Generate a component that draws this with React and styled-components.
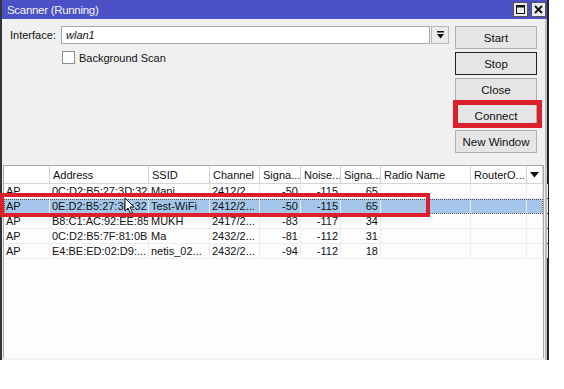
import React from 'react';
import styled, { createGlobalStyle } from 'styled-components';

const Global = createGlobalStyle`
  body {
    margin: 0;
    background: #ffffff;
    font-family: 'Liberation Sans', Arial, sans-serif;
    font-size: 11px;
    color: #111;
  }
`;

const Window = styled.div`
  position: relative;
  width: 545px;
  height: 360px;
  background: #f0f0f0;
  border-left: 2px solid #333;
  border-right: 2px solid #222;
  box-shadow: inset -2px 0 0 #bdbdbd;
  display: flex;
  flex-direction: column;
`;

const TitleBar = styled.div`
  height: 19px;
  background: #4b50c6;
  color: #f4f4f4;
  display: flex;
  align-items: center;
  padding: 0 1px 0 5px;
  font-size: 11.5px;
  letter-spacing: -0.3px;
`;

const Title = styled.span`
  flex: 1;
`;

const TitleButton = styled.div`
  width: 13px;
  height: 13px;
  margin-left: 3px;
  background: #ececec;
  border: 1px solid #555;
  display: flex;
  align-items: center;
  justify-content: center;
`;

const Top = styled.div`
  display: flex;
  padding: 7px 10px 0 8px;
`;

const Form = styled.div`
  flex: 1;
  display: flex;
  flex-direction: column;
`;

const FieldRow = styled.div`
  display: flex;
  align-items: center;
  height: 18px;
`;

const Label = styled.span`
  width: 51px;
`;

const Input = styled.div`
  width: 363px;
  height: 16px;
  background: #fff;
  border: 1px solid #a8a8a8;
  display: flex;
  align-items: center;
  padding-left: 4px;
  font-style: italic;
`;

const DropButton = styled.div`
  width: 16px;
  height: 16px;
  margin-left: 1px;
  background: #ececec;
  border: 1px solid #b8b8b8;
  display: flex;
  align-items: center;
  justify-content: center;
`;

const CheckRow = styled.label`
  display: flex;
  align-items: center;
  margin-top: 7px;
  padding-left: 52px;
`;

const Check = styled.span`
  width: 11px;
  height: 11px;
  border: 1px solid #8c8c8c;
  background: #fff;
  margin-right: 4px;
`;

const Buttons = styled.div`
  width: 82px;
  display: flex;
  flex-direction: column;
  gap: 3px;
`;

const Button = styled.div`
  box-sizing: border-box;
  height: 23px;
  border: 1px solid ${p => (p.$focused ? '#222' : '#adadad')};
  background: #e5e5e5;
  display: flex;
  align-items: center;
  justify-content: center;
  font-size: 11.5px;
`;

const Table = styled.div`
  margin: 12px 3px 2px 1px;
  flex: 1;
  background: #fdfdfd;
  border: 1px solid #aaa;
  border-bottom: none;
  display: flex;
  flex-direction: column;
`;

const cols = '46px 99px 61px 50px 41px 40px 40px 90px 56px 16px 1fr';

const HeadRow = styled.div`
  display: grid;
  grid-template-columns: ${cols};
  height: 17px;
  border-bottom: 1px solid #d5d5d5;
  background: #fff;
`;

const HeadCell = styled.div`
  border-right: 1px solid #d0d0d0;
  padding-left: 3px;
  display: flex;
  align-items: center;
  white-space: nowrap;
  overflow: hidden;
`;

const Row = styled.div`
  display: grid;
  grid-template-columns: ${cols};
  height: 14px;
  border-bottom: 1px solid #ececec;
  background: ${p => (p.$selected ? '#a5c6ea' : 'transparent')};
  outline: ${p => (p.$selected ? '1px dotted #555' : 'none')};
  outline-offset: -1px;
`;

const Cell = styled.div`
  border-right: 1px solid #ececec;
  padding: 0 2px;
  display: flex;
  align-items: center;
  justify-content: ${p => (p.$right ? 'flex-end' : 'flex-start')};
  white-space: nowrap;
  overflow: hidden;
  line-height: 14px;
`;

const Mark = styled.div`
  position: absolute;
  border: 4px solid #dc1f2b;
  box-sizing: border-box;
  pointer-events: none;
`;

const Cursor = styled.svg`
  position: absolute;
  left: 122px;
  top: 197px;
`;

const headers = ['', 'Address', 'SSID', 'Channel', 'Signa...', 'Noise...', 'Signa...', 'Radio Name', 'RouterO...'];

const rows = [
  ['AP', '0C:D2:B5:27:3D:32', 'Mapi', '2412/2...', '-50', '-115', '65'],
  ['AP', '0E:D2:B5:27:3D:32', 'Test-WiFi', '2412/2...', '-50', '-115', '65'],
  ['AP', 'B8:C1:AC:92:EE:85', 'MUKH', '2417/2...', '-83', '-117', '34'],
  ['AP', '0C:D2:B5:7F:81:0B', 'Ma', '2432/2...', '-81', '-112', '31'],
  ['AP', 'E4:BE:ED:02:D9:...', 'netis_02...', '2432/2...', '-94', '-112', '18'],
];

export default function App() {
  return (
    <>
      <Global />
      <Window>
        <TitleBar>
          <Title>Scanner (Running)</Title>
          <TitleButton>
            <svg width="9" height="9" viewBox="0 0 9 9">
              <rect x="0.5" y="0.5" width="8" height="8" fill="none" stroke="#111" />
              <line x1="0" y1="1.5" x2="9" y2="1.5" stroke="#111" strokeWidth="2" />
            </svg>
          </TitleButton>
          <TitleButton>
            <svg width="9" height="9" viewBox="0 0 9 9">
              <path d="M1 1 L8 8 M8 1 L1 8" stroke="#111" strokeWidth="2" />
            </svg>
          </TitleButton>
        </TitleBar>
        <Top>
          <Form>
            <FieldRow>
              <Label>Interface:</Label>
              <Input>wlan1</Input>
              <DropButton>
                <svg width="9" height="9" viewBox="0 0 9 9">
                  <rect x="1" y="0" width="7" height="1.5" fill="#111" />
                  <path d="M1 3 L8 3 L4.5 7.5 Z" fill="#111" />
                </svg>
              </DropButton>
            </FieldRow>
            <CheckRow>
              <Check />
              Background Scan
            </CheckRow>
          </Form>
          <Buttons>
            <Button>Start</Button>
            <Button $focused>Stop</Button>
            <Button>Close</Button>
            <Button>Connect</Button>
            <Button>New Window</Button>
          </Buttons>
        </Top>
        <Table>
          <HeadRow>
            {headers.map((h, i) => (
              <HeadCell key={i}>{h}</HeadCell>
            ))}
            <HeadCell>
              <svg width="9" height="6" viewBox="0 0 9 6">
                <path d="M0 0 L9 0 L4.5 5.5 Z" fill="#111" />
              </svg>
            </HeadCell>
            <HeadCell />
          </HeadRow>
          {rows.map((r, i) => (
            <Row key={i} $selected={i === 1}>
              <Cell>{r[0]}</Cell>
              <Cell>{r[1]}</Cell>
              <Cell>{r[2]}</Cell>
              <Cell>{r[3]}</Cell>
              <Cell $right>{r[4]}</Cell>
              <Cell $right>{r[5]}</Cell>
              <Cell $right>{r[6]}</Cell>
              <Cell />
              <Cell />
              <Cell />
              <Cell />
            </Row>
          ))}
        </Table>
        <Mark style={{ left: -2, top: 193, width: 430, height: 24 }} />
        <Mark style={{ left: 451, top: 100, width: 89, height: 28, borderWidth: 5 }} />
        <Cursor width="12" height="18" viewBox="0 0 12 18">
          <path d="M1 1 L1 14 L4 11 L6.5 16.5 L8.5 15.5 L6 10 L10 10 Z" fill="#fff" stroke="#111" strokeWidth="1" />
        </Cursor>
      </Window>
    </>
  );
}
